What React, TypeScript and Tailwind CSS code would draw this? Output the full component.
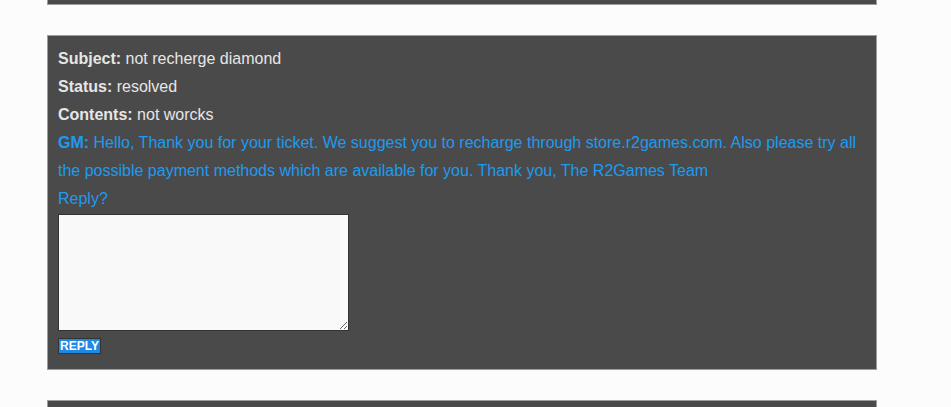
export default function App() {
  return (
    <div className="min-h-screen bg-[#fcfcfc] font-['Liberation_Sans',Arial,sans-serif]">
      <div className="ml-[47px] w-[830px]">
        <div className="h-[5px] border-x border-b border-[#9e9e9e] bg-[#4a4a4a]" />
        <div className="mt-[30px] border border-[#9e9e9e] bg-[#4a4a4a] px-[10px] pb-[15px] pt-[9px] text-[16px] leading-[28px] text-[#e6e6e6]">
          <div>
            <b>Subject:</b> not recherge diamond
          </div>
          <div>
            <b>Status:</b> resolved
          </div>
          <div>
            <b>Contents:</b> not worcks
          </div>
          <div className="text-[#1d9bf0]">
            <b>GM:</b> Hello, Thank you for your ticket. We suggest you to recharge through store.r2games.com. Also please try all the possible payment methods which are available for you. Thank you, The R2Games Team
          </div>
          <div className="text-[#1d9bf0]">Reply?</div>
          <textarea className="mt-px block h-[117px] w-[291px] border border-[#333] bg-[#f9f9f9] outline-none" />
          <button className="mt-[7px] block h-[16px] border border-[#333] bg-[#1e88e5] px-px text-[12px] font-bold leading-[14px] text-white">
            REPLY
          </button>
        </div>
        <div className="mt-[30px] h-[20px] border-x border-t border-[#9e9e9e] bg-[#4a4a4a]" />
      </div>
    </div>
  );
}
